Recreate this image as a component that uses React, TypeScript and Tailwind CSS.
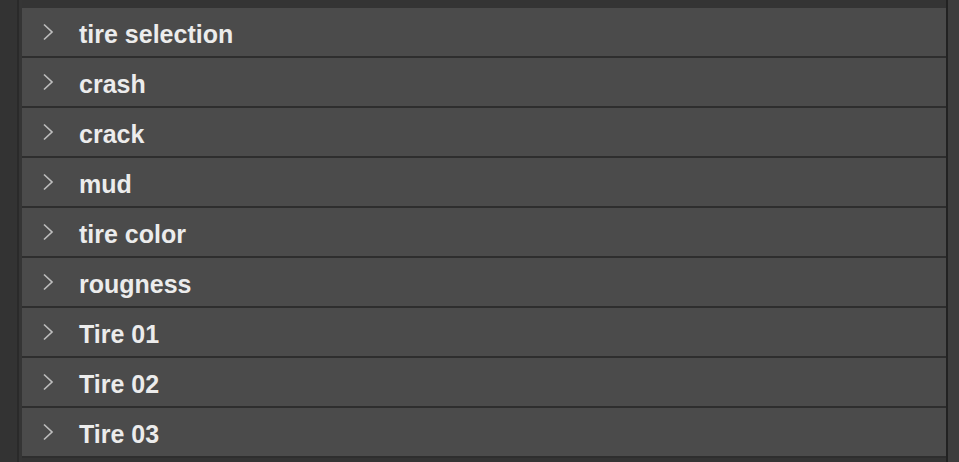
const items = [
  "tire selection",
  "crash",
  "crack",
  "mud",
  "tire color",
  "rougness",
  "Tire 01",
  "Tire 02",
  "Tire 03",
];

function Chevron() {
  return (
    <svg width="12" height="18" viewBox="0 0 12 18" className="shrink-0">
      <path d="M2 1.5 L10 9 L2 16.5" fill="none" stroke="#bdbdbd" strokeWidth="1.7" />
    </svg>
  );
}

export default function App() {
  return (
    <div
      className="flex h-[462px] w-full overflow-hidden bg-[#343434]"
      style={{ fontFamily: '"Liberation Sans", Arial, sans-serif' }}
    >
      <div className="flex w-[22px] shrink-0">
        <div className="w-[17px] bg-[#333333]" />
        <div className="w-[2px] bg-[#2a2a2a]" />
        <div className="w-[3px] bg-[#353535]" />
      </div>
      <div className="flex flex-1 flex-col pt-[8px]">
        {items.map((label) => (
          <div
            key={label}
            className="flex h-[50px] shrink-0 items-center border-b-2 border-[#2e2e2e] bg-[#4b4b4b] pl-[20px]"
          >
            <Chevron />
            <span className="ml-[25px] pt-[5px] text-[25px] font-bold leading-none text-[#ececec]">
              {label}
            </span>
          </div>
        ))}
      </div>
      <div className="w-[2px] shrink-0 bg-[#222222]" />
      <div className="w-[11px] shrink-0 bg-[#3d3d3d]" />
    </div>
  );
}
